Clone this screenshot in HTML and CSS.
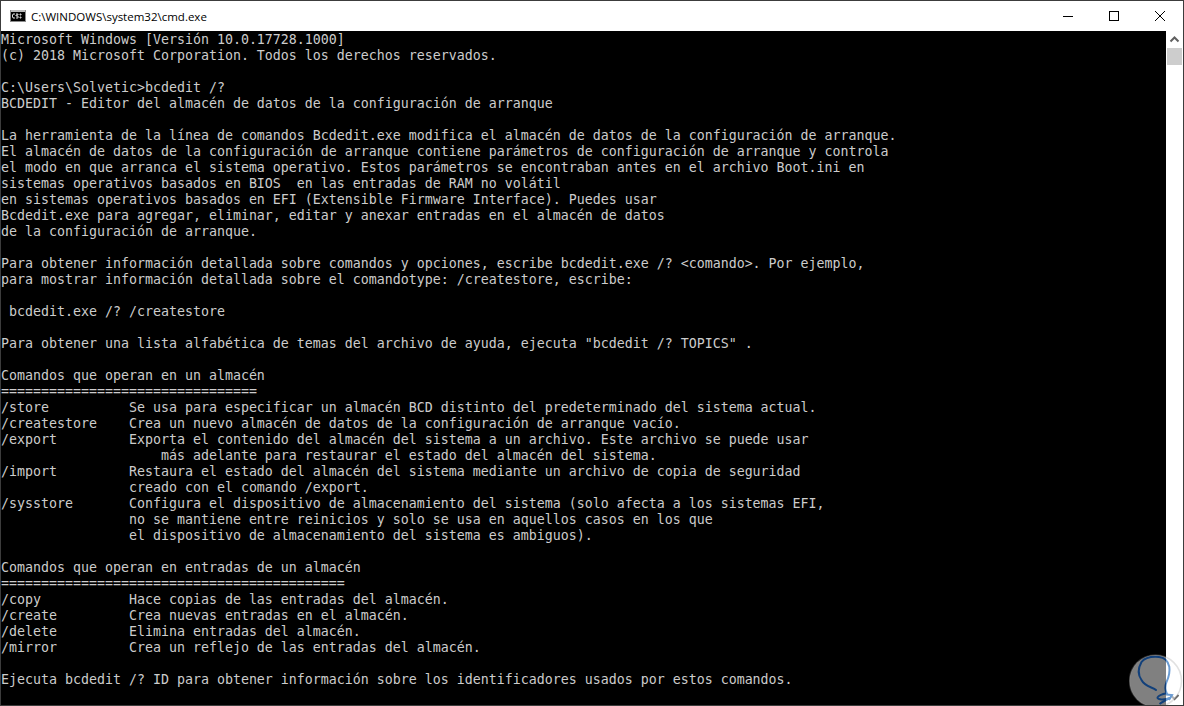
FILE: index.html
```html
<!DOCTYPE html>
<html lang="es">
<head>
<meta charset="utf-8">
<title>C:\WINDOWS\system32\cmd.exe</title>
<link rel="stylesheet" href="styles.css">
</head>
<body>
<div class="window">
  <header class="titlebar">
    <svg class="app-icon" width="16" height="12" viewBox="0 0 16 12"><rect width="16" height="12" fill="#8c8c8c"/><rect x="1" y="2" width="14" height="9" fill="#000"/><rect x="1" y="0.5" width="14" height="1" fill="#e8e8e8"/><path d="M5 4H3v1H2.500v2H3v1h2M6 4h2v1H6v1h2v2H6M10 4h1v1h-1zM10 7h1v1h-1z" fill="none" stroke="#d8d8d8" stroke-width="1"/></svg>
    <span class="title">C:\WINDOWS\system32\cmd.exe</span>
    <div class="controls">
      <div class="ctl"><svg width="10" height="10" viewBox="0 0 10 10"><path d="M0 5.500H10" stroke="#000" fill="none"/></svg></div>
      <div class="ctl"><svg width="10" height="10" viewBox="0 0 10 10"><rect x="0.500" y="0.500" width="9" height="9" stroke="#000" fill="none"/></svg></div>
      <div class="ctl"><svg width="10" height="10" viewBox="0 0 10 10"><path d="M0 0L10 10M10 0L0 10" stroke="#000" stroke-width="1" fill="none"/></svg></div>
    </div>
  </header>
  <div class="client">
    <pre class="console">Microsoft Windows [Versión 10.0.17728.1000]
(c) 2018 Microsoft Corporation. Todos los derechos reservados.

C:\Users\Solvetic&gt;bcdedit /?
BCDEDIT - Editor del almacén de datos de la configuración de arranque

La herramienta de la línea de comandos Bcdedit.exe modifica el almacén de datos de la configuración de arranque.
El almacén de datos de la configuración de arranque contiene parámetros de configuración de arranque y controla
el modo en que arranca el sistema operativo. Estos parámetros se encontraban antes en el archivo Boot.ini en
sistemas operativos basados en BIOS  en las entradas de RAM no volátil
en sistemas operativos basados en EFI (Extensible Firmware Interface). Puedes usar
Bcdedit.exe para agregar, eliminar, editar y anexar entradas en el almacén de datos
de la configuración de arranque.

Para obtener información detallada sobre comandos y opciones, escribe bcdedit.exe /? &lt;comando&gt;. Por ejemplo,
para mostrar información detallada sobre el comandotype: /createstore, escribe:

 bcdedit.exe /? /createstore

Para obtener una lista alfabética de temas del archivo de ayuda, ejecuta "bcdedit /? TOPICS" .

Comandos que operan en un almacén
================================
/store          Se usa para especificar un almacén BCD distinto del predeterminado del sistema actual.
/createstore    Crea un nuevo almacén de datos de la configuración de arranque vacío.
/export         Exporta el contenido del almacén del sistema a un archivo. Este archivo se puede usar
                    más adelante para restaurar el estado del almacén del sistema.
/import         Restaura el estado del almacén del sistema mediante un archivo de copia de seguridad
                creado con el comando /export.
/sysstore       Configura el dispositivo de almacenamiento del sistema (solo afecta a los sistemas EFI,
                no se mantiene entre reinicios y solo se usa en aquellos casos en los que
                el dispositivo de almacenamiento del sistema es ambiguos).

Comandos que operan en entradas de un almacén
===========================================
/copy           Hace copias de las entradas del almacén.
/create         Crea nuevas entradas en el almacén.
/delete         Elimina entradas del almacén.
/mirror         Crea un reflejo de las entradas del almacén.

Ejecuta bcdedit /? ID para obtener información sobre los identificadores usados por estos comandos.</pre>
    <div class="scrollbar">
      <svg class="arrow" width="17" height="17" viewBox="0 0 17 17"><path d="M4.500 10.500L8.500 6.500L12.500 10.500" stroke="#606060" stroke-width="2" fill="none"/></svg>
      <div class="thumb"></div>
      <div class="track"></div>
      <svg class="arrow" width="17" height="17" viewBox="0 0 17 17"><path d="M4.500 7L8.500 11L12.500 7" stroke="#606060" stroke-width="2" fill="none"/></svg>
    </div>
    <svg class="watermark" width="54" height="51" viewBox="0 0 54 51">
      <defs>
        <linearGradient id="logo" gradientUnits="userSpaceOnUse" x1="0" y1="0" x2="54" y2="0">
          <stop offset="0.68" stop-color="#12407a"/>
          <stop offset="0.68" stop-color="#6a9bd2"/>
        </linearGradient>
      </defs>
      <circle cx="26.500" cy="27" r="26" fill="#fff" fill-opacity="0.5" stroke="#9a9a9a" stroke-opacity="0.3" stroke-width="1.500"/>
      <path d="M27 36C24 33 16 33 12.500 26C9 21 8 16 12.500 8C16 3.500 24 2.500 30 3C35 3.500 39 7 40.300 12.700C41 18 39.500 24 37.500 28C36 32 36 36 37.700 39.300C34 40 30 41 28.500 43.500C28 46 36 46 41 44" stroke="url(#logo)" stroke-width="2" fill="none" stroke-linecap="round"/>
      <path d="M37 40.500L43 41L40 46M41 44C37 46 33 48 30.500 50" stroke="url(#logo)" stroke-width="2" fill="none"/>
    </svg>
  </div>
</div>
</body>
</html>
```
FILE: styles.css
```css
html, body { margin: 0; padding: 0; height: 100%; background: #fff; overflow: hidden; }
.window { width: 1184px; height: 706px; box-sizing: border-box; display: flex; flex-direction: column; border: 1px solid #3c3c3c; background: #fff; }
.titlebar { height: 30px; flex: none; display: flex; align-items: center; background: #fff; padding-left: 9px; }
.app-icon { flex: none; }
.title { margin-left: 5px; font: 11.5px "Open Sans", "Liberation Sans", sans-serif; color: #000; white-space: nowrap; }
.controls { margin-left: auto; display: flex; }
.ctl { width: 46px; height: 30px; display: flex; align-items: center; justify-content: center; }
.client { flex: 1; display: flex; min-height: 0; position: relative; }
.console { flex: 1; margin: 0; padding-top: 1px; background: #000; color: #cccccc; font: 13.29px/16px "DejaVu Sans Mono", monospace; overflow: hidden; white-space: pre; }
.scrollbar { width: 17px; flex: none; background: #fff; display: flex; flex-direction: column; }
.arrow { flex: none; }
.thumb { height: 17px; margin: 0 1px; background: #cdcdcd; flex: none; }
.track { flex: 1; }
.watermark { position: absolute; right: 0; bottom: 0; }
```
